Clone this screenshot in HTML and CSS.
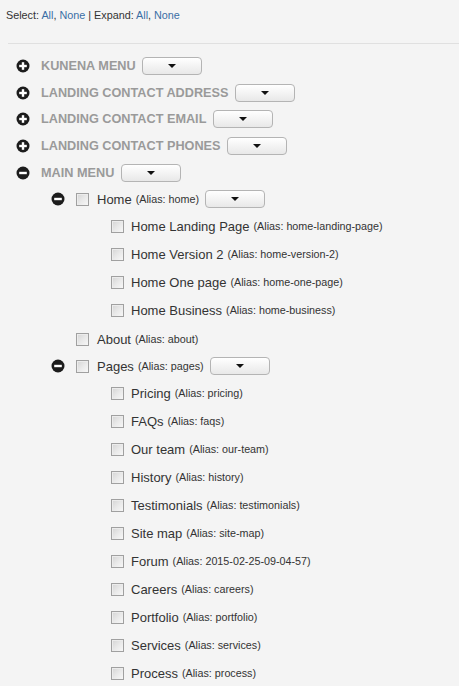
FILE: index.html
```html
<!DOCTYPE html>
<html>
<head>
<meta charset="utf-8">
<link rel="stylesheet" href="styles.css">
</head>
<body>
<div class="toolbar">Select: <a href="#">All</a>, <a href="#">None</a> | Expand: <a href="#">All</a>, <a href="#">None</a></div>
<div class="divider"></div>
<ul class="tree level1">
  <li><div class="row top"><span class="tog"><svg viewBox="0 0 14 14" width="14" height="14"><circle cx="7" cy="7" r="6.5" fill="#1c1c1c"/><rect x="3.2" y="5.8" width="7.6" height="2.4" fill="#fff"/><rect x="5.8" y="3.2" width="2.4" height="7.6" fill="#fff"/></svg></span><span class="menu">KUNENA MENU</span><button class="btn"><span class="caret"></span></button></div></li>
  <li><div class="row top"><span class="tog"><svg viewBox="0 0 14 14" width="14" height="14"><circle cx="7" cy="7" r="6.5" fill="#1c1c1c"/><rect x="3.2" y="5.8" width="7.6" height="2.4" fill="#fff"/><rect x="5.8" y="3.2" width="2.4" height="7.6" fill="#fff"/></svg></span><span class="menu">LANDING CONTACT ADDRESS</span><button class="btn"><span class="caret"></span></button></div></li>
  <li><div class="row top"><span class="tog"><svg viewBox="0 0 14 14" width="14" height="14"><circle cx="7" cy="7" r="6.5" fill="#1c1c1c"/><rect x="3.2" y="5.8" width="7.6" height="2.4" fill="#fff"/><rect x="5.8" y="3.2" width="2.4" height="7.6" fill="#fff"/></svg></span><span class="menu">LANDING CONTACT EMAIL</span><button class="btn"><span class="caret"></span></button></div></li>
  <li><div class="row top"><span class="tog"><svg viewBox="0 0 14 14" width="14" height="14"><circle cx="7" cy="7" r="6.5" fill="#1c1c1c"/><rect x="3.2" y="5.8" width="7.6" height="2.4" fill="#fff"/><rect x="5.8" y="3.2" width="2.4" height="7.6" fill="#fff"/></svg></span><span class="menu">LANDING CONTACT PHONES</span><button class="btn"><span class="caret"></span></button></div></li>
  <li><div class="row top"><span class="tog"><svg viewBox="0 0 14 14" width="14" height="14"><circle cx="7" cy="7" r="6.5" fill="#1c1c1c"/><rect x="3.2" y="5.8" width="7.6" height="2.4" fill="#fff"/></svg></span><span class="menu">MAIN MENU</span><button class="btn"><span class="caret"></span></button></div>
    <ul class="tree level2">
      <li><div class="row parent"><span class="tog"><svg viewBox="0 0 14 14" width="14" height="14"><circle cx="7" cy="7" r="6.5" fill="#1c1c1c"/><rect x="3.2" y="5.8" width="7.6" height="2.4" fill="#fff"/></svg></span><input type="checkbox" class="cb"><span class="name">Home</span><span class="alias">(Alias: home)</span><button class="btn"><span class="caret"></span></button></div>
        <ul class="tree level3 gap">
          <li><div class="row leaf"><span class="tog"></span><input type="checkbox" class="cb"><span class="name">Home Landing Page</span><span class="alias">(Alias: home-landing-page)</span></div></li>
          <li><div class="row leaf"><span class="tog"></span><input type="checkbox" class="cb"><span class="name">Home Version 2</span><span class="alias">(Alias: home-version-2)</span></div></li>
          <li><div class="row leaf"><span class="tog"></span><input type="checkbox" class="cb"><span class="name">Home One page</span><span class="alias">(Alias: home-one-page)</span></div></li>
          <li><div class="row leaf"><span class="tog"></span><input type="checkbox" class="cb"><span class="name">Home Business</span><span class="alias">(Alias: home-business)</span></div></li>
        </ul>
      </li>
      <li><div class="row leaf"><span class="tog"></span><input type="checkbox" class="cb"><span class="name">About</span><span class="alias">(Alias: about)</span></div></li>
      <li><div class="row parent"><span class="tog"><svg viewBox="0 0 14 14" width="14" height="14"><circle cx="7" cy="7" r="6.5" fill="#1c1c1c"/><rect x="3.2" y="5.8" width="7.6" height="2.4" fill="#fff"/></svg></span><input type="checkbox" class="cb"><span class="name">Pages</span><span class="alias">(Alias: pages)</span><button class="btn"><span class="caret"></span></button></div>
        <ul class="tree level3">
          <li><div class="row leaf"><span class="tog"></span><input type="checkbox" class="cb"><span class="name">Pricing</span><span class="alias">(Alias: pricing)</span></div></li>
          <li><div class="row leaf"><span class="tog"></span><input type="checkbox" class="cb"><span class="name">FAQs</span><span class="alias">(Alias: faqs)</span></div></li>
          <li><div class="row leaf"><span class="tog"></span><input type="checkbox" class="cb"><span class="name">Our team</span><span class="alias">(Alias: our-team)</span></div></li>
          <li><div class="row leaf"><span class="tog"></span><input type="checkbox" class="cb"><span class="name">History</span><span class="alias">(Alias: history)</span></div></li>
          <li><div class="row leaf"><span class="tog"></span><input type="checkbox" class="cb"><span class="name">Testimonials</span><span class="alias">(Alias: testimonials)</span></div></li>
          <li><div class="row leaf"><span class="tog"></span><input type="checkbox" class="cb"><span class="name">Site map</span><span class="alias">(Alias: site-map)</span></div></li>
          <li><div class="row leaf"><span class="tog"></span><input type="checkbox" class="cb"><span class="name">Forum</span><span class="alias">(Alias: 2015-02-25-09-04-57)</span></div></li>
          <li><div class="row leaf"><span class="tog"></span><input type="checkbox" class="cb"><span class="name">Careers</span><span class="alias">(Alias: careers)</span></div></li>
          <li><div class="row leaf"><span class="tog"></span><input type="checkbox" class="cb"><span class="name">Portfolio</span><span class="alias">(Alias: portfolio)</span></div></li>
          <li><div class="row leaf"><span class="tog"></span><input type="checkbox" class="cb"><span class="name">Services</span><span class="alias">(Alias: services)</span></div></li>
          <li><div class="row leaf"><span class="tog"></span><input type="checkbox" class="cb"><span class="name">Process</span><span class="alias">(Alias: process)</span></div></li>
        </ul>
      </li>
    </ul>
  </li>
</ul>
</body>
</html>
```

FILE: styles.css
```css
html, body {
  margin: 0;
  padding: 0;
  background: #f4f4f4;
  font-family: "Liberation Sans", Arial, sans-serif;
  color: #333;
  overflow: hidden;
}

.toolbar {
  padding: 9px 6px 0;
  font-size: 10.8px;
  line-height: 13px;
  color: #333;
}

.toolbar a {
  color: #3a6ea5;
  text-decoration: none;
}

.divider {
  margin: 21px 0 0 8px;
  border-top: 1px solid #e0e0e0;
}

.tree {
  list-style: none;
  margin: 0;
  padding: 0;
}

.level1 {
  padding-left: 16px;
  margin-top: 8.6px;
}

.level2,
.level3 {
  padding-left: 35px;
}

.level3.gap {
  margin-bottom: 1px;
}

.row {
  display: flex;
  align-items: center;
  white-space: nowrap;
}

.row.top {
  height: 26.75px;
}

.row.parent {
  height: 26px;
}

.row.leaf {
  height: 28px;
}

.tog {
  width: 14px;
  height: 14px;
  flex: none;
  margin-right: 11px;
  display: flex;
}

.menu {
  font-size: 12.7px;
  font-weight: bold;
  color: #9a9a9a;
}

.cb {
  -webkit-appearance: none;
  appearance: none;
  width: 13px;
  height: 13px;
  margin: 0 8px 0 0;
  flex: none;
  box-sizing: border-box;
  border: 1px solid #a0a0a0;
  background: linear-gradient(135deg, #d4d4d4 0%, #eaeaea 55%, #f7f7f7 100%);
  box-shadow: inset 1px 1px 0 #ececec;
}

.level3 .cb {
  margin-right: 7px;
}

.name {
  font-size: 13px;
  color: #333;
}

.alias {
  font-size: 10.75px;
  color: #333;
  margin-left: 4px;
}

.btn {
  width: 60px;
  height: 18px;
  margin-left: 6.5px;
  padding: 0;
  border: 1px solid #b4b4b4;
  border-radius: 4px;
  background: linear-gradient(#ffffff, #e8e8e8);
  display: flex;
  align-items: center;
  justify-content: center;
}

.row.parent .btn {
  margin-left: 6px;
}

.caret {
  width: 0;
  height: 0;
  border-left: 4px solid transparent;
  border-right: 4px solid transparent;
  border-top: 4px solid #111;
}
```
